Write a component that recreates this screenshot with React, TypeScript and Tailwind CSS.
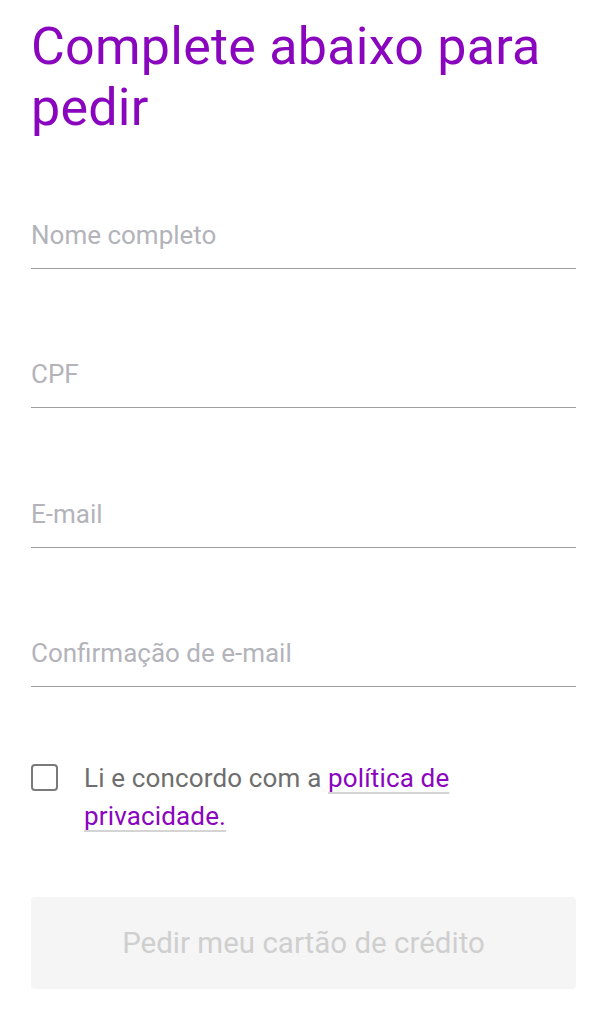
const fields = ['Nome completo', 'CPF', 'E-mail', 'Confirmação de e-mail'];

export default function App() {
  return (
    <div
      className="min-h-screen bg-white pl-[31px] pr-[39px] pt-4 pb-10"
      style={{ fontFamily: 'Roboto, "Noto Sans", sans-serif' }}
    >
      <h1 className="text-[52px] leading-[61px] font-normal tracking-[0.25px] text-[#8a05be]">
        Complete abaixo para pedir
      </h1>

      <form className="mt-[81px] flex flex-col gap-[89.3px]">
        {fields.map((label) => (
          <label key={label} className="block border-b border-[#9e9e9e] pb-[17px]">
            <input
              type="text"
              placeholder={label}
              className="w-full bg-transparent text-[26px] leading-[32px] text-[#333] placeholder:text-[#b3b3ba] outline-none"
            />
          </label>
        ))}
      </form>

      <div className="mt-[72px] flex items-start gap-[26px]">
        <span className="mt-[5px] h-[27px] w-[27px] shrink-0 rounded-[4px] border-2 border-[#7a7a7a]" />
        <p className="text-[26px] leading-[38px] tracking-[0.15px] text-[#6e6e6e]">
          Li e concordo com a{' '}
          <a
            href="#"
            className="text-[#8a05be] underline decoration-[#d4d4d4] decoration-2 underline-offset-[5px]"
          >
            política de privacidade.
          </a>
        </p>
      </div>

      <button
        type="button"
        disabled
        className="mt-[62px] flex h-[92px] w-full items-center justify-center rounded-[4px] bg-[#f5f5f5] text-[29.5px] text-[#cfcfcf]"
      >
        Pedir meu cartão de crédito
      </button>
    </div>
  );
}
